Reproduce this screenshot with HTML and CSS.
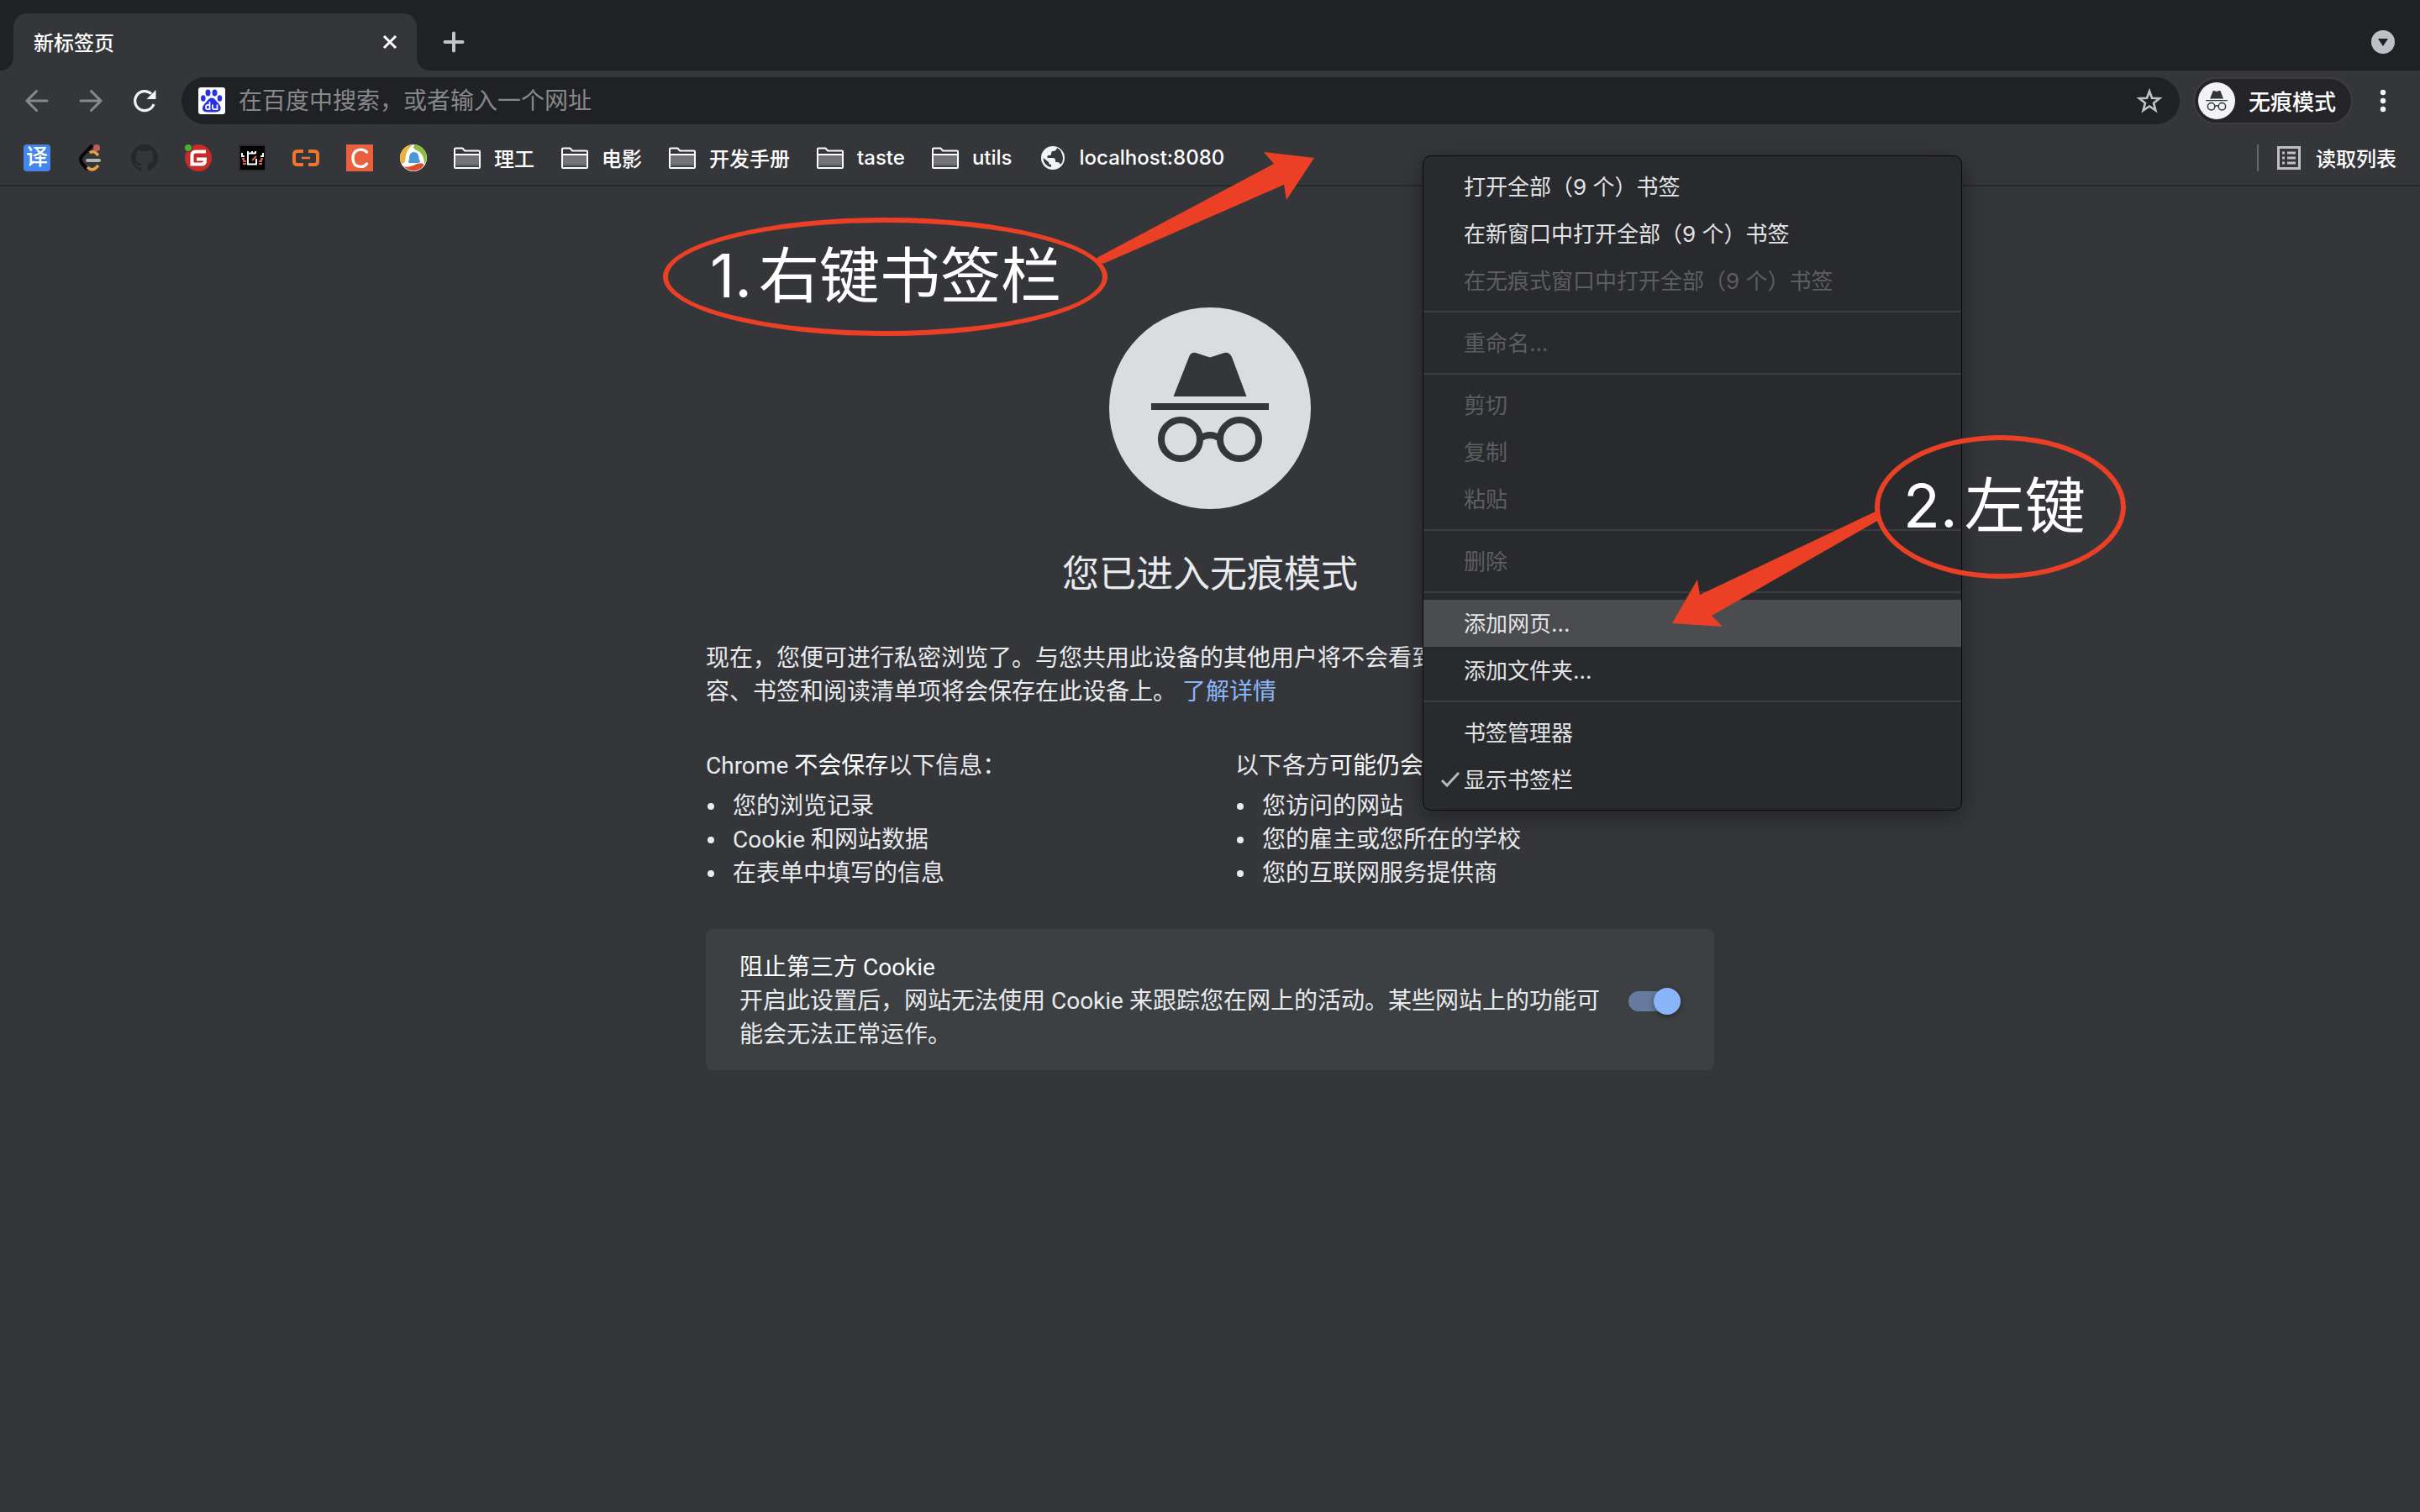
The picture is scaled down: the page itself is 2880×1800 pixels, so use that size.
FILE: index.html
```html
<!DOCTYPE html>
<html lang="zh-CN">
<head>
<meta charset="utf-8">
<title>新标签页</title>
<link rel="stylesheet" href="styles.css">
</head>
<body>
<svg class="defs" aria-hidden="true">
  <symbol id="folder" viewBox="0 0 32 32">
    <path d="M1 11h30v15H1z" fill="#727375"/>
    <path d="M1 24h30v2H1z" fill="#58595b"/>
    <path d="M2 4.500h8.500l2.500 3H30q1 0 1 1V27q0 1-1 1H2q-1 0-1-1V5.500q0-1 1-1zM1 12h30" fill="none" stroke="#fff" stroke-width="2"/>
  </symbol>
  <symbol id="spy" viewBox="0 0 240 240">
    <path d="M76.500 106 95 59q2-6 8-5l17 5.500L137 54q6-1 9 5l17.500 47zM50 114h140v8H50z" fill="currentColor"/>
    <g fill="none" stroke="currentColor" stroke-width="8"><circle cx="85" cy="157" r="23"/><circle cx="155" cy="157" r="23"/><path d="M108 156q12-8 24 0"/></g>
  </symbol>
</svg>

<header class="browser">
  <div class="tabstrip">
    <div class="tab">
      <span class="tab-title">新标签页</span>
      <button class="icon-btn" aria-label="关闭"><svg width="24" height="24" viewBox="0 0 24 24"><path d="M5 5l14 14M19 5 5 19" stroke="#fff" stroke-width="3"/></svg></button>
    </div>
    <button class="icon-btn new-tab" aria-label="打开新的标签页"><svg width="24" height="24" viewBox="0 0 24 24"><path d="M12 1.500v21M1.500 12h21" stroke="#c2c4c9" stroke-width="4" stroke-linecap="round"/></svg></button>
    <button class="icon-btn tab-search" aria-label="搜索标签页"><svg width="28" height="28" viewBox="0 0 28 28"><circle cx="14" cy="14" r="14" fill="#bdc1c6"/><path d="M8 10h12l-6 9z" fill="#202124"/></svg></button>
  </div>

  <div class="toolbar">
    <button class="icon-btn" aria-label="返回" disabled><svg width="32" height="32" viewBox="0 0 32 32"><path d="M28 16H4M15.500 4.500 4 16l11.500 11.500" fill="none" stroke="#87888b" stroke-width="3" stroke-linecap="round"/></svg></button>
    <button class="icon-btn" aria-label="前进" disabled><svg width="32" height="32" viewBox="0 0 32 32"><path d="M4 16h24M16.500 4.500 28 16 16.500 27.500" fill="none" stroke="#87888b" stroke-width="3" stroke-linecap="round"/></svg></button>
    <button class="icon-btn" aria-label="重新加载"><svg width="32" height="32" viewBox="0 0 32 32"><path d="M27 20A11.500 11.500 0 1 1 24 7.700" fill="none" stroke="#f1f3f4" stroke-width="3.200"/><path d="M29.500 3v11h-11z" fill="#f1f3f4"/></svg></button>
    <div class="omnibox">
      <svg width="32" height="32" viewBox="0 0 32 32" aria-hidden="true"><rect width="32" height="32" rx="3" fill="#fff"/><g fill="#2932e1"><ellipse cx="11.500" cy="6.500" rx="3" ry="4"/><ellipse cx="19.500" cy="6.500" rx="3" ry="4"/><ellipse cx="5.800" cy="13" rx="2.800" ry="3.800"/><ellipse cx="25.500" cy="13" rx="2.800" ry="3.800"/><path d="M16 12.500c3.500 0 5 3.500 7.500 6 5 5 4 11-2.500 11H11C4 29.500 3.500 24 7.500 19.500c3-3 5-7 8.500-7z"/></g><path d="M13.500 17v9.200h-2.300q-2.200 0-2.200-2.700t2.200-2.700h2.300M17 20.500v3.500q0 2.200 2.200 2.200h3.300v-5.700" fill="none" stroke="#fff" stroke-width="1.700"/></svg>
      <input type="text" placeholder="在百度中搜索，或者输入一个网址" aria-label="地址和搜索栏">
      <button class="icon-btn" aria-label="为此标签页添加书签"><svg width="32" height="32" viewBox="0 0 32 32"><path d="m16 4.500 3 8.300 9 .4-7 5.500 2.400 8.700L16 22.500l-7.400 4.900L11 18.700l-7-5.500 9-.4z" fill="none" stroke="#c0c2c5" stroke-width="2.600"/></svg></button>
    </div>
    <button class="profile"><span class="avatar"><svg width="44" height="44"><use href="#spy"/></svg></span><span class="label">无痕模式</span></button>
    <button class="icon-btn more" aria-label="更多"><svg width="8" height="32" viewBox="0 0 8 32"><g fill="#f1f3f4"><circle cx="4" cy="6" r="3.200"/><circle cx="4" cy="16" r="3.200"/><circle cx="4" cy="26" r="3.200"/></g></svg></button>
  </div>

  <nav class="bookmarks" aria-label="书签栏">
    <a href="#" aria-label="翻译"><span class="fanyi">译</span></a>
    <a href="#" aria-label="LeetCode"><svg viewBox="0 0 32 32"><path d="M18 1 6 13q-4 5 0 10l6 7" fill="none" stroke="#070707" stroke-width="4"/><path d="M15 10q4-3 7 0l3 3M12 27q5 5 10 1l3-3" fill="none" stroke="#e5a243" stroke-width="3.600"/><path d="M12 19h14" stroke="#b3b3b3" stroke-width="4" stroke-linecap="round"/><circle cx="23" cy="4" r="4" fill="#c25b56"/></svg></a>
    <a href="#" aria-label="GitHub"><svg viewBox="0 0 16 16"><path fill="#24292e" d="M8 0C3.580 0 0 3.580 0 8c0 3.540 2.290 6.530 5.470 7.590.4.070.55-.17.55-.38 0-.19-.01-.82-.01-1.490-2.010.37-2.530-.49-2.690-.94-.09-.23-.48-.94-.82-1.130-.28-.15-.68-.52-.01-.53.63-.01 1.080.58 1.230.82.72 1.210 1.870.87 2.330.66.07-.52.28-.87.51-1.070-1.780-.2-3.640-.89-3.640-3.950 0-.87.31-1.590.82-2.150-.08-.2-.36-1.020.08-2.120 0 0 .67-.21 2.200.82.64-.18 1.320-.27 2-.27s1.360.09 2 .27c1.530-1.040 2.200-.82 2.200-.82.44 1.100.16 1.920.08 2.120.51.56.82 1.270.82 2.150 0 3.070-1.870 3.750-3.650 3.950.29.25.54.73.54 1.480 0 1.070-.01 1.930-.01 2.200 0 .21.15.46.55.38A8.010 8.010 0 0 0 16 8c0-4.420-3.580-8-8-8z"/></svg></a>
    <a href="#" aria-label="Gitee"><svg viewBox="0 0 32 32"><circle cx="16" cy="16" r="16" fill="#c72a29"/><path d="M25 8.500H13Q8.500 8.500 8.500 13v10.500H20q4 0 4-4V17.500H14" fill="none" stroke="#fff" stroke-width="4"/><circle cx="4" cy="4" r="5" fill="#36373a"/><circle cx="4" cy="4" r="4" fill="#4eb22d"/></svg></a>
    <a href="#" aria-label="图标书签"><svg viewBox="0 0 32 32"><path fill="#2b2b2b" d="M0 0h32v32H0z"/><path fill="#000" d="M2 2h29v28H2z"/><path d="M20 10.500h-9v13h10V17M11 11V8M16 11V8M20 11V8M4 10v4h3M29 10v4h-3" fill="none" stroke="#fff" stroke-width="2"/><path d="M4 17h2v3h3M5 23h4M29 17h-2v3h-3M28 23h-4M16 19l5-5" fill="none" stroke="#d9634b" stroke-width="2"/></svg></a>
    <a href="#" aria-label="阿里云"><svg viewBox="0 0 32 32"><path d="M13 8H6Q2 8 2 12v8q0 4 4 4h7M19 8h7q4 0 4 4v8q0 4-4 4h-7" fill="none" stroke="#ef7430" stroke-width="4"/><path d="m13 6-3 4H7l1-4zM13 26l-3-4H7l1 4zM19 6l3 4h3l-1-4zM19 26l3-4h3l-1 4z" fill="#ef7430"/><path d="M11 16h10" stroke="#ef7430" stroke-width="2.600"/></svg></a>
    <a href="#" aria-label="C"><svg viewBox="0 0 32 32"><path fill="#e9603f" d="M0 0h32v32H0z"/><path d="M24.500 9Q21.500 6 17.500 6 8 6.500 8 16.500 8 26 17.500 26.500q4.500 0 7-3.500" fill="none" stroke="#fff" stroke-width="3.200" stroke-linecap="round"/></svg></a>
    <a href="#" aria-label="QQ 浏览器"><svg viewBox="0 0 32 32"><circle cx="16" cy="16" r="16" fill="#fff"/><path d="M16 0Q4 1 .5 12q-1.500 7 2 11 4-1 4-7Q7 6 16 0z" fill="#eab23d"/><path d="M18 0q10 2 13 11 2 7-2 13 0-14-9-17-7-3-2-7z" fill="#88bd40"/><path d="M4 26q5 2 12-1 7-4 12-2 1 3-4 6-10 6-20-3z" fill="#dc4f2c"/><path d="M16.500 9q6 0 6 8l2 4-3 1H11l-1-1 1-4q0-8 5.500-8z" fill="#4a98d8"/></svg></a>
    <a href="#"><svg><use href="#folder"/></svg><span class="label">理工</span></a>
    <a href="#"><svg><use href="#folder"/></svg><span class="label">电影</span></a>
    <a href="#"><svg><use href="#folder"/></svg><span class="label">开发手册</span></a>
    <a href="#"><svg><use href="#folder"/></svg><span class="label">taste</span></a>
    <a href="#"><svg><use href="#folder"/></svg><span class="label">utils</span></a>
    <a href="#"><svg viewBox="0 0 32 32"><circle cx="16" cy="16" r="14" fill="#f1f3f4"/><path d="M21 4q-1 4-5 4-2 0-2 3 0 2-3 2-3 1-1 3h6q3 0 3 3v2h2q3 0 4 3 3-3 3-7T25 7zM4.500 16q0 9 9.500 11v-3q-3 0-3-3z" fill="#36373a"/></svg><span class="label">localhost:8080</span></a>
    <button class="reading-list"><svg width="28" height="28" viewBox="0 0 28 28"><path d="M1.500 1.500h25v25h-25z" fill="none" stroke="#c0c0c0" stroke-width="3"/><path d="M6 8h3m3 0h10M6 14h3m3 0h10M6 20h3m3 0h10" stroke="#c0c0c0" stroke-width="3"/></svg><span class="label">读取列表</span></button>
  </nav>
</header>

<main class="page">
  <div class="hero"><svg width="240" height="240"><use href="#spy"/></svg></div>
  <h1>您已进入无痕模式</h1>
  <p>现在，您便可进行私密浏览了。与您共用此设备的其他用户将不会看到您的活动。不过，下载内容、书签和阅读清单项将会保存在此设备上。 <a href="#">了解详情</a></p>
  <div class="columns">
    <section>
      <h2>Chrome <em>不会保存</em>以下信息：</h2>
      <ul><li>您的浏览记录</li><li>Cookie 和网站数据</li><li>在表单中填写的信息</li></ul>
    </section>
    <section>
      <h2>以下各方<em>可能仍会看到</em>您的活动：</h2>
      <ul><li>您访问的网站</li><li>您的雇主或您所在的学校</li><li>您的互联网服务提供商</li></ul>
    </section>
  </div>
  <label class="cookie-card">
    <span class="cookie-text"><strong>阻止第三方 Cookie</strong><span>开启此设置后，网站无法使用 Cookie 来跟踪您在网上的活动。某些网站上的功能可能会无法正常运作。</span></span>
    <input class="toggle" type="checkbox" checked>
  </label>
</main>

<div class="menu" role="menu">
  <button role="menuitem">打开全部（9 个）书签</button>
  <button role="menuitem">在新窗口中打开全部（9 个）书签</button>
  <button role="menuitem" disabled>在无痕式窗口中打开全部（9 个）书签</button>
  <hr>
  <button role="menuitem" disabled>重命名...</button>
  <hr>
  <button role="menuitem" disabled>剪切</button>
  <button role="menuitem" disabled>复制</button>
  <button role="menuitem" disabled>粘贴</button>
  <hr>
  <button role="menuitem" disabled>删除</button>
  <hr>
  <button role="menuitem" class="active">添加网页...</button>
  <button role="menuitem">添加文件夹...</button>
  <hr>
  <button role="menuitem">书签管理器</button>
  <button role="menuitemcheckbox" aria-checked="true"><svg class="check" width="24" height="24" viewBox="0 0 24 24"><path d="m2 13 6 6L22 4" fill="none" stroke="#b9babc" stroke-width="3"/></svg>显示书签栏</button>
</div>

<svg class="arrow arrow-one" width="264" height="136" viewBox="0 0 264 136" aria-hidden="true"><path d="M7 126 216 15 204 1l60 7-33 50-3-18L15 133q-6 2-9-1-3-3 1-6z" fill="#eb4025"/></svg>
<div class="callout callout-one"><span>1.</span><span>右键书签栏</span></div>
<svg class="arrow arrow-two" width="248" height="56" viewBox="0 0 248 56" aria-hidden="true"><path d="M244-82 33 18 30 0 0 52l60 4-13-13L246-71z" fill="#eb4025"/></svg>
<div class="callout callout-two"><span>2.</span><span>左键</span></div>
</body>
</html>
```
FILE: styles.css
```css
* { box-sizing: border-box; }

body {
  margin: 0;
  min-height: 100vh;
  position: relative;
  background: #35363a;
  color: #e8eaed;
  font-family: Inter, "Noto Sans CJK SC", sans-serif;
}

.defs { position: absolute; width: 0; height: 0; }

svg { display: block; flex: none; overflow: visible; }

button, input {
  margin: 0;
  padding: 0;
  border: 0;
  background: none;
  color: inherit;
  font: inherit;
}

.icon-btn { display: flex; align-items: center; justify-content: center; }

/* Tab strip */
.tabstrip {
  display: flex;
  align-items: center;
  height: 84px;
  padding: 16px 30px 0 16px;
  background: #202124;
}

.tab {
  position: relative;
  display: flex;
  align-items: center;
  justify-content: space-between;
  width: 480px;
  height: 68px;
  padding: 0 20px 0 24px;
  border-radius: 16px 16px 0 0;
  background: #35363a;
  color: #fff;
  font-size: 24px;
  font-weight: 500;
}

.tab-title, .label { padding-bottom: 2px; }

.tab::before, .tab::after {
  content: "";
  position: absolute;
  bottom: 0;
  width: 16px;
  height: 16px;
}
.tab::before { left: -16px; background: radial-gradient(circle at 0 0, transparent 16px, #35363a 16px); }
.tab::after { right: -16px; background: radial-gradient(circle at 100% 0, transparent 16px, #35363a 16px); }

.new-tab { margin-left: 32px; }
.tab-search { margin-left: auto; }

/* Toolbar */
.toolbar {
  display: flex;
  align-items: center;
  gap: 32px;
  height: 72px;
  padding: 0 40px 0 28px;
}

.omnibox {
  display: flex;
  flex: 1;
  align-items: center;
  gap: 16px;
  height: 56px;
  margin: 0 -16px 0 -4px;
  padding: 0 20px;
  border-radius: 28px;
  background: #202124;
  font-size: 28px;
}
.omnibox input { flex: 1; min-width: 0; outline: 0; }
.omnibox input::placeholder { color: #87888a; opacity: 1; }

.profile {
  display: flex;
  align-items: center;
  gap: 16px;
  height: 56px;
  padding: 0 18px 0 4px;
  border: 2px solid #3f3d43;
  border-radius: 28px;
  background: #252429;
  color: #fff;
  font-size: 26px;
  font-weight: 500;
}
.avatar { border-radius: 50%; background: #f1f3f4; color: #35363a; }

/* Bookmarks bar */
.bookmarks {
  display: flex;
  align-items: center;
  gap: 32px;
  height: 66px;
  padding: 0 28px;
  border-bottom: 2px solid #292929;
  color: #fff;
  font-size: 24px;
  font-weight: 500;
}
.bookmarks a {
  display: flex;
  align-items: center;
  gap: 16px;
  color: inherit;
  text-decoration: none;
  white-space: nowrap;
}
.bookmarks a svg { width: 32px; height: 32px; }

.fanyi {
  width: 32px;
  height: 32px;
  border-radius: 4px;
  background: #4387ee;
  font-size: 26px;
  line-height: 30px;
  text-align: center;
}

.reading-list {
  display: flex;
  align-items: center;
  gap: 18px;
  height: 32px;
  margin-left: auto;
  padding-left: 22px;
  border-left: 2px solid #66676a;
}

/* Incognito page */
.page {
  max-width: 1200px;
  margin: 0 auto;
  padding: 144px 0 48px;
  font-family: Roboto, "Noto Sans CJK SC", sans-serif;
  font-size: 28px;
  line-height: 40px;
}

.hero {
  width: 240px;
  margin: 0 auto 50px;
  border-radius: 50%;
  background: #dadce0;
  color: #35363a;
}

h1 {
  margin: 0 0 52px;
  font-size: 44px;
  font-weight: 400;
  line-height: 56px;
  text-align: center;
}

.page p { margin: 0 0 48px; }
.page p a { color: #8ab4f8; text-decoration: none; }

.columns {
  display: grid;
  grid-template-columns: 1fr 1fr;
  gap: 60px;
  margin-bottom: 46px;
}
.columns h2 { margin: 0 0 8px; font-size: 28px; font-weight: 400; }
.columns em { color: #fff; font-style: normal; }
.columns ul { margin: 0; padding: 0; list-style: none; }
.columns li { display: flex; align-items: center; gap: 22px; }
.columns li::before {
  content: "";
  width: 8px;
  height: 8px;
  margin-left: 2px;
  border-radius: 50%;
  background: currentColor;
}

.cookie-card {
  display: flex;
  align-items: center;
  gap: 24px;
  padding: 26px 40px 22px;
  border-radius: 8px;
  background: #3c4043;
}
.cookie-text { flex: 1; display: flex; flex-direction: column; }
.cookie-text strong { color: #fff; font-weight: 400; }

.toggle {
  appearance: none;
  position: relative;
  width: 62px;
  height: 24px;
  border-radius: 12px;
  background: #67799f;
}
.toggle::before {
  content: "";
  position: absolute;
  top: -4px;
  right: 0;
  width: 32px;
  height: 32px;
  border-radius: 50%;
  background: #8ab4f8;
  box-shadow: 0 2px 6px rgb(0 0 0 / 40%);
}

/* Context menu */
.menu {
  position: absolute;
  top: 185px;
  left: 1693px;
  width: 642px;
  padding: 8px 0;
  border: 1px solid #0b0b0c;
  border-radius: 10px;
  background: #292a2d;
  box-shadow: 0 8px 28px rgb(0 0 0 / 35%);
  color: #e3e4e6;
  font-size: 26px;
}
.menu button {
  position: relative;
  display: block;
  width: 100%;
  height: 56px;
  padding: 0 0 4px 48px;
  text-align: left;
}
.menu button:disabled { color: #5d5e61; }
.menu .active { background: #4b4c4f; }
.menu hr { height: 2px; margin: 8px 0; border: 0; background: #3c3d41; }
.check { position: absolute; top: 16px; left: 20px; }

/* Annotations */
.arrow, .callout { position: absolute; }

.callout {
  display: flex;
  align-items: center;
  gap: 8px;
  padding-bottom: 4px;
  border: 6px solid #eb4025;
  border-radius: 50%;
  color: #fff;
  font-size: 72px;
  line-height: 1;
  white-space: nowrap;
}
.callout-one { top: 259px; left: 789px; width: 529px; height: 141px; padding-left: 50px; }
.callout-two { top: 518px; left: 2231px; width: 299px; height: 171px; padding-left: 28px; }
.arrow-one { top: 180px; left: 1300px; }
.arrow-two { top: 690px; left: 1990px; }
```
